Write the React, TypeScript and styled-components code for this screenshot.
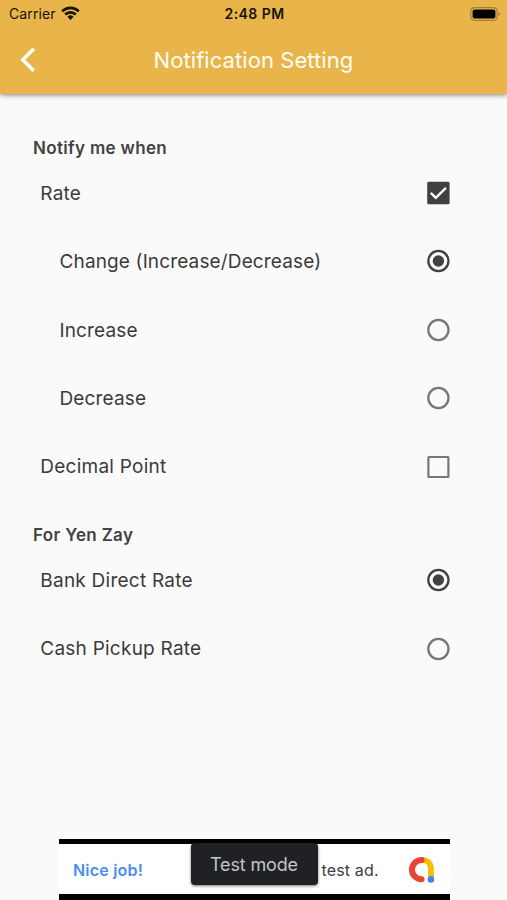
import React, { useState } from "react";
import styled, { createGlobalStyle } from "styled-components";

const GlobalStyle = createGlobalStyle`
  * { box-sizing: border-box; }
  body { margin: 0; background: #fafafa; font-family: Inter, "Liberation Sans", sans-serif; }
`;

const Screen = styled.div`
  width: 100%;
  height: 900px;
  display: flex;
  flex-direction: column;
  background: #fafafa;
  overflow: hidden;
`;

const Header = styled.header`
  height: 94px;
  flex: none;
  background: #e9b54b;
  box-shadow: 0 1px 5px rgba(0, 0, 0, 0.48);
`;

const StatusBar = styled.div`
  height: 27px;
  display: grid;
  grid-template-columns: 1fr auto 1fr;
  align-items: center;
  padding: 0 7px 0 9px;
  color: #17130a;
`;

const Carrier = styled.div`
  display: flex;
  align-items: center;
  gap: 5.5px;
  font-size: 14px;
  line-height: 27px;
  letter-spacing: 0.1px;
`;

const Clock = styled.div`
  font-size: 14px;
  font-weight: 600;
  line-height: 27px;
  letter-spacing: 0.45px;
`;

const BatteryIcon = styled.svg`
  justify-self: end;
  margin-right: -1px;
`;

const TitleBar = styled.div`
  height: 66px;
  display: grid;
  grid-template-columns: 56px 1fr 56px;
  align-items: center;
`;

const BackButton = styled.button`
  display: flex;
  align-items: center;
  height: 66px;
  padding: 0 0 0 19px;
  border: 0;
  background: none;
`;

const Title = styled.h1`
  margin: 0;
  text-align: center;
  color: #fffdf4;
  font-size: 22px;
  font-weight: 400;
  line-height: 64px;
  letter-spacing: 0.07px;
  white-space: nowrap;
`;

const Main = styled.main`
  flex: 1;
  padding: 19.5px 57px 0 33px;
`;

const SectionTitle = styled.h2`
  margin: 0;
  height: 45.3px;
  padding-top: 22px;
  color: #424242;
  font-size: 17px;
  font-weight: 600;
  line-height: 24px;
  letter-spacing: 0.33px;
`;

const Row = styled.label<{ $nested?: boolean }>`
  height: 68.4px;
  display: flex;
  align-items: center;
  justify-content: space-between;
  padding-left: ${(p) => (p.$nested ? 26.5 : 7.3)}px;
  color: #3b3b3b;
  font-size: 19px;
  letter-spacing: ${(p) => (p.$nested ? 0.14 : 0.24)}px;
  white-space: nowrap;
`;

const Label = styled.span`
  padding-top: 0.6px;
`;

const Box = styled.button`
  display: flex;
  padding: 0;
  border: 0;
  background: none;
`;

const AdBanner = styled.aside`
  position: relative;
  width: 391px;
  height: 61px;
  flex: none;
  margin-left: 58.5px;
  border-top: 5.5px solid #000;
  background: #000;
`;

const AdCard = styled.div`
  height: 50px;
  display: flex;
  align-items: center;
  padding: 1px 15px 0 14.5px;
  background: #fff;
  font-size: 16px;
`;

const AdLead = styled.span`
  color: #4b8df0;
  font-weight: 600;
  letter-spacing: 0.2px;
  width: 248.5px;
`;

const AdText = styled.span`
  flex: 1;
  color: #3c4043;
  letter-spacing: 0.15px;
  white-space: nowrap;
`;

const Toast = styled.div`
  position: absolute;
  left: 132px;
  top: -1px;
  width: 127px;
  height: 42px;
  border-radius: 4px;
  background: #202124;
  box-shadow: 0 1px 3px rgba(0, 0, 0, 0.55);
  color: #c4c5c7;
  font-size: 18px;
  line-height: 43px;
  letter-spacing: -0.15px;
  text-align: center;
  white-space: nowrap;
`;

const Check = ({ on }: { on: boolean }) => (
  <svg width="24" height="24" viewBox="-0.4 0 24 24">
    {on ? (
      <>
        <rect x="0.8" y="0.8" width="22.4" height="22.4" rx="1.5" fill="#414141" />
        <path d="M4.4 11.9 9.4 16.8 19.5 6.9" fill="none" stroke="#fafafa" strokeWidth="2.4" />
      </>
    ) : (
      <rect x="2" y="2" width="20" height="20" rx="0.5" fill="none" stroke="#777" strokeWidth="2.2" />
    )}
  </svg>
);

const Radio = ({ on }: { on: boolean }) => (
  <svg width="24" height="24" viewBox="-0.4 0 24 24">
    <circle cx="12" cy="12" r="10.1" fill="none" stroke={on ? "#414141" : "#777"} strokeWidth="2.3" />
    {on && <circle cx="12" cy="12" r="5.7" fill="#414141" />}
  </svg>
);

const WifiIcon = () => (
  <svg width="19" height="15" viewBox="0 0 19 15">
    <g fill="none" stroke="#17130a" strokeWidth="2.7">
      <path d="M1.2 5.2a11.8 11.8 0 0 1 16.6 0" />
      <path d="M4.2 8.5a7.5 7.5 0 0 1 10.6 0" />
    </g>
    <path d="M6.5 10.8a4.3 4.3 0 0 1 6 0L9.5 13.9z" fill="#17130a" />
  </svg>
);

const Battery = () => (
  <BatteryIcon width="31" height="14" viewBox="0 0 31 14">
    <rect x="0.8" y="0.7" width="26.4" height="12.6" rx="3.7" fill="none" stroke="#a37e35" strokeWidth="1.2" />
    <rect x="2.6" y="2.5" width="22.8" height="9" rx="2" fill="#000" />
    <path d="M28.6 5v4c1.9-.7 1.9-3.3 0-4z" fill="#a37e35" />
  </BatteryIcon>
);

const AdMobLogo = () => (
  <svg width="28" height="28" viewBox="0 0 28 28">
    <path d="M15 3.9c5.6 0 9 4 9 9.3v9.5" fill="none" stroke="#fbbc04" strokeWidth="5.8" />
    <path d="M14.6 4a9.6 9.6 0 1 0 0 19.3" fill="none" stroke="#e94335" strokeWidth="6" strokeLinecap="round" />
    <circle cx="23.9" cy="23.4" r="3.3" fill="#4285f4" />
  </svg>
);

const directions = ["Change (Increase/Decrease)", "Increase", "Decrease"];
const yenRates = ["Bank Direct Rate", "Cash Pickup Rate"];

export default function App() {
  const [rate, setRate] = useState(true);
  const [decimal, setDecimal] = useState(false);
  const [direction, setDirection] = useState(0);
  const [yenRate, setYenRate] = useState(0);

  return (
    <Screen>
      <GlobalStyle />
      <Header>
        <StatusBar>
          <Carrier>Carrier <WifiIcon /></Carrier>
          <Clock>2:48 PM</Clock>
          <Battery />
        </StatusBar>
        <TitleBar>
          <BackButton aria-label="Back">
            <svg width="18" height="26" viewBox="0 0 18 26">
              <path d="M14.8 1.8 3.8 12.8l11 11" fill="none" stroke="#fffdf6" strokeWidth="3.6" />
            </svg>
          </BackButton>
          <Title>Notification Setting</Title>
        </TitleBar>
      </Header>
      <Main>
        <SectionTitle>Notify me when</SectionTitle>
        <Row>
          <Label>Rate</Label>
          <Box aria-label="Rate" onClick={() => setRate(!rate)}><Check on={rate} /></Box>
        </Row>
        {directions.map((name, i) => (
          <Row key={name} $nested>
            <Label>{name}</Label>
            <Box aria-label={name} onClick={() => setDirection(i)}><Radio on={direction === i} /></Box>
          </Row>
        ))}
        <Row>
          <Label>Decimal Point</Label>
          <Box aria-label="Decimal Point" onClick={() => setDecimal(!decimal)}><Check on={decimal} /></Box>
        </Row>
        <SectionTitle>For Yen Zay</SectionTitle>
        {yenRates.map((name, i) => (
          <Row key={name}>
            <Label>{name}</Label>
            <Box aria-label={name} onClick={() => setYenRate(i)}><Radio on={yenRate === i} /></Box>
          </Row>
        ))}
      </Main>
      <AdBanner>
        <AdCard>
          <AdLead>Nice job!</AdLead>
          <AdText>test ad.</AdText>
          <AdMobLogo />
        </AdCard>
        <Toast>Test mode</Toast>
      </AdBanner>
    </Screen>
  );
}
